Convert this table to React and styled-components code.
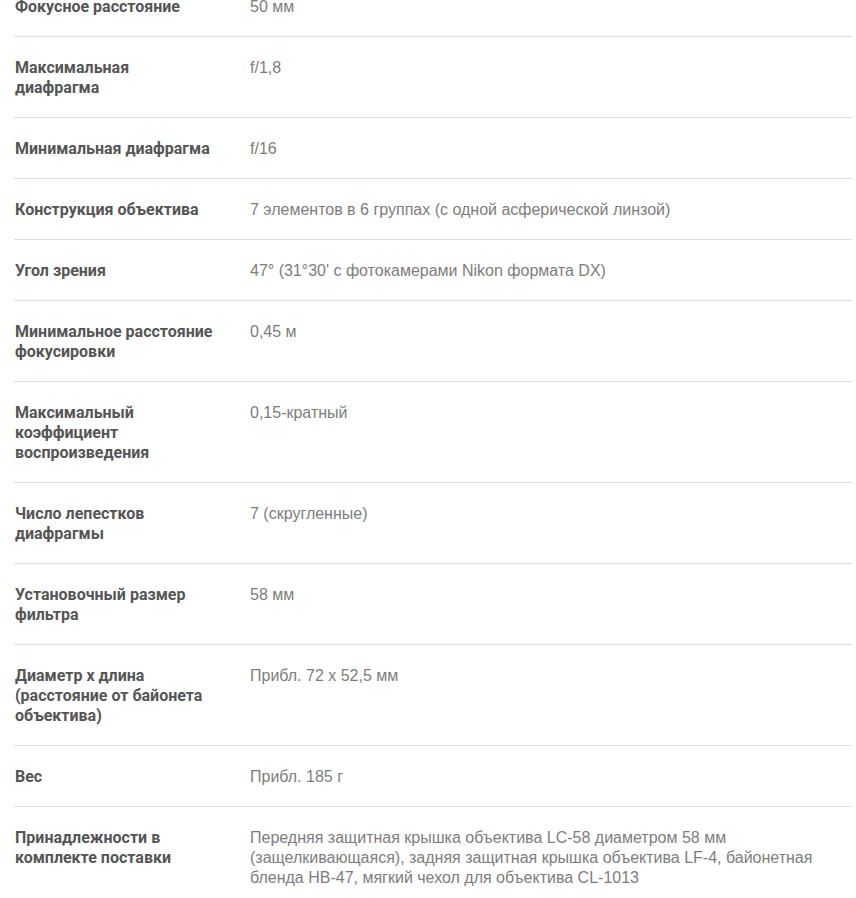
import styled, { createGlobalStyle } from 'styled-components';

const specs = [
  ['Фокусное расстояние', '50 мм'],
  ['Максимальная диафрагма', 'f/1,8'],
  ['Минимальная диафрагма', 'f/16'],
  ['Конструкция объектива', '7 элементов в 6 группах (с одной асферической линзой)'],
  ['Угол зрения', "47° (31°30' с фотокамерами Nikon формата DX)"],
  ['Минимальное расстояние фокусировки', '0,45 м'],
  ['Максимальный коэффициент воспроизведения', '0,15-кратный'],
  ['Число лепестков диафрагмы', '7 (скругленные)'],
  ['Установочный размер фильтра', '58 мм'],
  ['Диаметр x длина (расстояние от байонета объектива)', 'Прибл. 72 x 52,5 мм'],
  ['Вес', 'Прибл. 185 г'],
  [
    'Принадлежности в комплекте поставки',
    [
      'Передняя защитная крышка объектива LC-58 диаметром 58 мм',
      '(защелкивающаяся), задняя защитная крышка объектива LF-4, байонетная',
      'бленда HB-47, мягкий чехол для объектива CL-1013',
    ],
  ],
];

function App() {
  return (
    <>
      <GlobalStyle />
      <SpecTable>
        {specs.map(([label, value]) => (
          <SpecRow key={label}>
            <SpecLabel>{label}</SpecLabel>
            <SpecValue>
              {Array.isArray(value)
                ? value.map((line, i) => (
                    <span key={i}>
                      {line}
                      {i < value.length - 1 && <br />}
                    </span>
                  ))
                : value}
            </SpecValue>
          </SpecRow>
        ))}
      </SpecTable>
    </>
  );
}

const GlobalStyle = createGlobalStyle`
  body {
    margin: 0;
    background: #fff;
    font-family: Roboto, "Liberation Sans", Arial, sans-serif;
    overflow: hidden;
  }
`;

const SpecTable = styled.div`
  margin: -24px 4px 0 14px;
`;

const SpecRow = styled.div`
  display: grid;
  grid-template-columns: 236px 1fr;
  padding: 21px 0 19px;
  border-bottom: 1px solid #dcdcdc;
  font-size: 16px;
  line-height: 20px;
`;

const SpecLabel = styled.div`
  max-width: 199px;
  padding-left: 1px;
  font-weight: 700;
  color: #555;
`;

const SpecValue = styled.div`
  font-family: "Liberation Sans", Arial, sans-serif;
  color: #7d7d7d;
`;

export default App;
